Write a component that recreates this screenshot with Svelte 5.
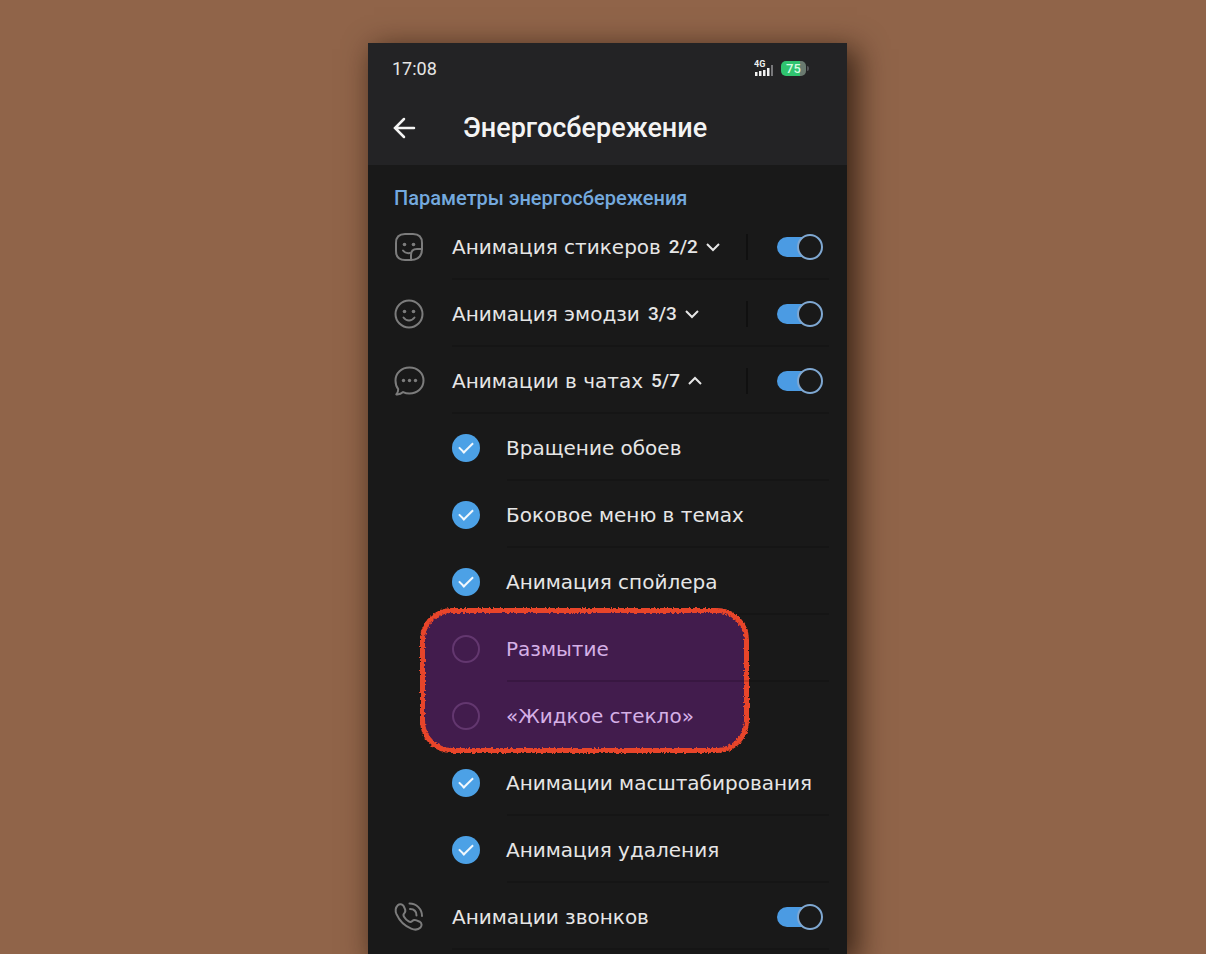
<script>
  let groups = $state([
    { id: 'stickers', icon: 'sticker', label: 'Анимация стикеров', count: '2/2', open: false, on: true },
    { id: 'emoji', icon: 'smile', label: 'Анимация эмодзи', count: '3/3', open: false, on: true },
    { id: 'chats', icon: 'chat', label: 'Анимации в чатах', count: '5/7', open: true, on: true }
  ]);

  let before = $state([
    { id: 'wallpaper', label: 'Вращение обоев', on: true },
    { id: 'sidemenu', label: 'Боковое меню в темах', on: true },
    { id: 'spoiler', label: 'Анимация спойлера', on: true }
  ]);
  let marked = $state([
    { id: 'blur', label: 'Размытие', on: false },
    { id: 'glass', label: '«Жидкое стекло»', on: false }
  ]);
  let after = $state([
    { id: 'zoom', label: 'Анимации масштабирования', on: true },
    { id: 'delete', label: 'Анимация удаления', on: true }
  ]);
  let calls = $state(true);
</script>

{#snippet icon(name)}
  <svg class="icon" viewBox="0 0 32 32" aria-hidden="true">
    {#if name === 'sticker'}
      <path d="M17.5 29H12C6 29 3 26 3 20v-8C3 6 6 3 12 3h8c6 0 9 3 9 9v6c0 7-4 11-11.500 11z" />
      <path d="M18 29v-5c0-4 2-6 6-6h5" />
      <path d="M10 19.500c1.500 2 4 3 7 2.500" />
      <circle class="dot" cx="11.500" cy="13.500" r="1.800" /><circle class="dot" cx="20.500" cy="13.500" r="1.800" />
    {:else if name === 'smile'}
      <circle cx="16" cy="16" r="13.500" />
      <path d="M10.500 19.500c3 4 8 4 11 0" />
      <circle class="dot" cx="11.500" cy="13.500" r="1.800" /><circle class="dot" cx="20.500" cy="13.500" r="1.800" />
    {:else if name === 'chat'}
      <path d="M16.500 2.500c8 0 14 5.500 14 13s-6 13-14 13c-2.300 0-4.500-.5-6.400-1.400-1.800 1.700-4.300 2.500-6.800 2.300 1.300-1.600 2-3.300 1.900-5.200C3.400 21.900 2.500 19 2.500 15.500c0-7.500 6-13 14-13z" />
      <circle class="dot" cx="10.500" cy="15.500" r="1.700" /><circle class="dot" cx="16.500" cy="15.500" r="1.700" /><circle class="dot" cx="22.500" cy="15.500" r="1.700" />
    {:else}
      <path d="M4.800 4.200c1.800-1.700 4.600-1.300 5.800.8l1.300 2.900c.8 1.700.4 3.300-.7 4.500-1 1-1 2-.2 3.300 1.200 2 2.700 3.500 4.700 4.700 1.300.8 2.300.8 3.300-.2 1.200-1.100 2.800-1.500 4.500-.8l3.200 1.300c2.100 1.200 2.500 4 .8 5.800-2.200 2.300-5.600 2.700-9.300 1.100C11.500 25 6.300 19.500 3.500 13.200c-1.500-3.700-.9-6.800 1.300-9z" />
      <path d="M16.500 2.500c7 0 12.500 5.500 12.500 12.500" />
      <path d="M17 8c4 0 6.500 2.500 6.500 6.500" />
    {/if}
  </svg>
{/snippet}

{#snippet option(item)}
  <li class="option">
    <input class="tick" type="checkbox" id={item.id} bind:checked={item.on} />
    <label for={item.id}>{item.label}</label>
  </li>
{/snippet}

<svg class="defs" aria-hidden="true">
  <filter id="rough" x="-5%" y="-5%" width="110%" height="110%">
    <feTurbulence type="fractalNoise" baseFrequency="0.45" numOctaves="2" seed="4" result="noise" />
    <feDisplacementMap in="SourceGraphic" in2="noise" scale="4" xChannelSelector="R" yChannelSelector="G" />
  </filter>
</svg>

<div class="stage">
  <main class="phone">
    <header>
      <div class="status">
        <time>17:08</time>
        <div class="indicators">
          <svg class="signal" viewBox="0 0 20 18" role="img" aria-label="Сигнал 4G">
            <text x="0" y="8">4G</text>
            <path d="M1 13h2.500v4H1zM5 12h2.500v5H5zM9 11h2.500v6H9zM13 9h2.500v8H13z" />
            <path class="weak" d="M17 6h2v11h-2z" />
          </svg>
          <span class="battery">75</span>
        </div>
      </div>
      <div class="bar">
        <button class="back" type="button" aria-label="Назад">
          <svg viewBox="0 0 24 24" aria-hidden="true"><path d="M22 12H3.500M12 3L3 12l9 9" /></svg>
        </button>
        <h1>Энергосбережение</h1>
      </div>
    </header>

    <section>
      <h2>Параметры энергосбережения</h2>
      <ul>
        {#each groups as group (group.id)}
          <li class="row">
            {@render icon(group.icon)}
            <button class="expand" type="button" aria-expanded={group.open} onclick={() => (group.open = !group.open)}>
              <span id="{group.id}-label">{group.label}</span>
              <b>{group.count}</b>
              <svg class="chevron" class:up={group.open} viewBox="0 0 14 10" aria-hidden="true"><path d="M1 2l6 6 6-6" /></svg>
            </button>
            <span class="split"></span>
            <input class="switch" type="checkbox" role="switch" aria-labelledby="{group.id}-label" bind:checked={group.on} />
          </li>
        {/each}
      </ul>
      {#if groups[2].open}
        <ul>
          {#each before as item (item.id)}{@render option(item)}{/each}
        </ul>
        <ul class="marked">
          {#each marked as item (item.id)}{@render option(item)}{/each}
        </ul>
        <ul>
          {#each after as item (item.id)}{@render option(item)}{/each}
        </ul>
      {/if}
      <div class="row">
        {@render icon('phone')}
        <label for="calls">Анимации звонков</label>
        <input class="switch" type="checkbox" role="switch" id="calls" bind:checked={calls} />
      </div>
    </section>
  </main>
</div>

<style>
  :global(body) {
    margin: 0;
    background: #906449;
  }
  .defs {
    position: absolute;
    width: 0;
    height: 0;
  }
  .stage {
    box-sizing: border-box;
    min-height: 100vh;
    display: flex;
    justify-content: center;
    padding: 43px 0 0 9px;
    overflow: hidden;
  }
  .phone {
    width: 100%;
    max-width: 479px;
    background: #191919;
    color: #e6e6e6;
    font-family: "DejaVu Sans", sans-serif;
    font-size: 20px;
    box-shadow: 8px 8px 28px 2px rgba(30, 15, 5, 0.75);
  }
  header {
    background: #232325;
    font-family: Roboto, sans-serif;
  }
  .status {
    display: flex;
    align-items: center;
    justify-content: space-between;
    height: 50px;
    padding: 0 41px 0 24px;
    font-size: 18px;
  }
  .indicators {
    display: flex;
    align-items: center;
    gap: 7px;
  }
  .signal {
    width: 20px;
    height: 18px;
    fill: #f0f0f0;
  }
  .signal text {
    font: 700 9px Roboto, sans-serif;
  }
  .signal .weak {
    fill: #77777a;
  }
  .battery {
    position: relative;
    width: 25px;
    height: 15px;
    border-radius: 5px;
    background: linear-gradient(90deg, #2fc46f 75%, #6a7a70 75%);
    color: #d4fbe0;
    font-size: 13px;
    font-weight: 500;
    line-height: 15px;
    text-align: center;
  }
  .battery::after {
    content: "";
    position: absolute;
    left: 26px;
    top: 5px;
    width: 2px;
    height: 5px;
    border-radius: 0 2px 2px 0;
    background: #55555a;
  }
  .bar {
    display: flex;
    align-items: center;
    gap: 47px;
    height: 70px;
    padding: 0 24px 2px;
  }
  button {
    border: 0;
    padding: 0;
    background: none;
    color: inherit;
    font: inherit;
    cursor: pointer;
  }
  .back svg {
    display: block;
    width: 24px;
    height: 24px;
    fill: none;
    stroke: #f4f4f4;
    stroke-width: 2.500;
    stroke-linecap: round;
  }
  h1 {
    margin: 0;
    color: #f4f4f4;
    font-size: 27px;
    font-weight: 500;
    line-height: 32px;
  }
  h2 {
    margin: 0;
    padding: 20px 26px 2px;
    color: #74a9de;
    font: 500 20px/26px Roboto, sans-serif;
  }
  ul {
    margin: 0;
    padding: 0;
    list-style: none;
  }
  .row,
  .option {
    position: relative;
    box-sizing: border-box;
    display: flex;
    align-items: center;
    height: 67px;
    padding: 0 24px 0 25px;
  }
  .row::after,
  .option::after {
    content: "";
    position: absolute;
    left: 84px;
    right: 18px;
    bottom: 0;
    height: 2px;
    background: #151515;
  }
  .option::after {
    left: 139px;
  }
  .option {
    padding-left: 84px;
    gap: 26px;
  }
  .row label {
    flex: 1;
  }
  label {
    cursor: pointer;
    white-space: nowrap;
  }
  .icon {
    flex: none;
    width: 32px;
    height: 32px;
    margin-right: 27px;
    fill: none;
    stroke: #7c7c7c;
    stroke-width: 2;
    stroke-linecap: round;
    stroke-linejoin: round;
  }
  .icon .dot {
    fill: #7c7c7c;
    stroke: none;
  }
  .expand {
    flex: 1;
    display: flex;
    align-items: center;
    gap: 8px;
    white-space: nowrap;
  }
  .expand b {
    font: 500 19px Roboto, sans-serif;
  }
  .chevron {
    width: 14px;
    height: 10px;
    fill: none;
    stroke: #e6e6e6;
    stroke-width: 2;
  }
  .chevron.up {
    transform: rotate(180deg);
  }
  .split {
    width: 2px;
    height: 26px;
    margin-right: 29px;
    background: #101010;
  }
  .switch {
    appearance: none;
    position: relative;
    width: 46px;
    height: 28px;
    margin: 0;
    cursor: pointer;
  }
  .switch::before {
    content: "";
    position: absolute;
    inset: 4px 10px 4px 0;
    border-radius: 10px;
    background: #4b9be3;
  }
  .switch::after {
    content: "";
    position: absolute;
    right: 0;
    top: 1px;
    box-sizing: border-box;
    width: 26px;
    height: 26px;
    border: 2px solid #7fa8d2;
    border-radius: 50%;
    background: #191919;
  }
  .switch:not(:checked)::before {
    background: #555;
  }
  .switch:not(:checked)::after {
    right: 20px;
    border-color: #777;
  }
  .tick {
    appearance: none;
    flex: none;
    box-sizing: border-box;
    width: 28px;
    height: 28px;
    margin: 0;
    border: 2px solid #63376f;
    border-radius: 50%;
    cursor: pointer;
  }
  .tick:checked {
    position: relative;
    border: 0;
    background: #4ca1e6;
  }
  .tick:checked::after {
    content: "";
    position: absolute;
    left: 7px;
    top: 8px;
    width: 12px;
    height: 6px;
    border: solid #f2f8fd;
    border-width: 0 0 2px 2px;
    transform: rotate(-45deg);
  }
  .marked {
    position: relative;
    z-index: 0;
    color: #d5b0e6;
  }
  .marked::before {
    content: "";
    position: absolute;
    z-index: -1;
    inset: -7px 98px -4px 52px;
    border: 5px solid #e8452a;
    border-radius: 32px;
    background: #421c4d;
    filter: url(#rough);
  }
  .marked .option::after {
    background: rgba(0, 0, 0, 0.15);
  }
  .marked .option:last-child::after {
    display: none;
  }
</style>
